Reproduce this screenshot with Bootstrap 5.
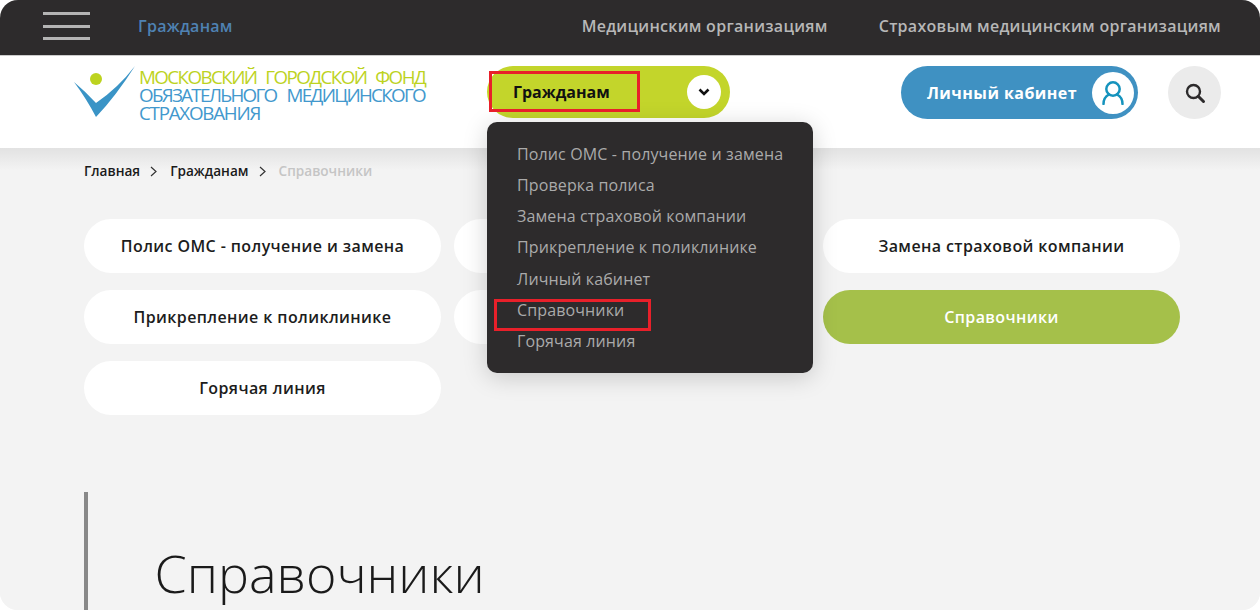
<!DOCTYPE html>
<html lang="ru">
<head>
  <meta charset="UTF-8">
  <title>Справочники</title>
  <meta name="viewport" content="width=device-width, initial-scale=1">
  <link href="https://cdn.jsdelivr.net/npm/bootstrap@5.3.3/dist/css/bootstrap.min.css" rel="stylesheet">
  <style>
    html, body { height: 610px; overflow: hidden; background: #fff; }
    body { font-family: "Open Sans", sans-serif; }
    .page-frame { height: 610px; border-radius: 18px; overflow: hidden; background: #f3f3f3; position: relative; }
    .top-strip { height: 56px; background: #2d2b2c; padding: 0 39px 3px 43px; border-bottom: 1px solid #ccc; }
    .burger { width: 47px; margin-right: 48px; gap: 9.5px; }
    .burger span { display: block; height: 3px; background: #b4b4b4; }
    .top-link { font-size: 16px; font-weight: 600; color: #b7b7b7; text-decoration: none; letter-spacing: .28px; }
    .top-link.current { color: #4f82b3; }
    .top-links-right { gap: 51px; }
    .main-head { height: 92px; background: #fff; padding: 10px 39px 0 74px; }
    .logo-box { width: 413px; }
    .logo-text { margin: 2px 0 0 3px; font-size: 18.8px; line-height: 18px; font-weight: 400; white-space: nowrap; color: #4298cd; }
    .logo-line-a { color: #bdd31f; letter-spacing: -1.58px; word-spacing: 5.5px; }
    .logo-line-b { letter-spacing: -1.7px; word-spacing: 7px; }
    .logo-line-c { letter-spacing: -1.25px; }
    .section-pill { width: 243px; height: 52px; background: #c3d52b; border-radius: 26px; padding: 0 9px 0 26px; font-size: 16px; font-weight: 700; color: #111; }
    .chev-circle { width: 34px; height: 34px; border-radius: 50%; background: #fff; }
    .cabinet-pill { width: 237px; height: 53px; background: #3f91c2; border-radius: 27px; padding: 0 4px 0 26px; font-size: 16px; font-weight: 700; color: #fff; letter-spacing: .45px; margin-left: auto; }
    .cabinet-icon { width: 42px; height: 42px; border-radius: 50%; background: #fff; }
    .search-circle { width: 53px; height: 53px; border-radius: 50%; background: #ebebeb; margin-left: 30px; }
    .page-body { background: linear-gradient(#e2e2e2, #f3f3f3 22px); padding: 0 80px 0 84px; height: 462px; }
    .crumbs { padding-top: 13px; height: 71px; font-size: 13.6px; font-weight: 600; color: #1a1a1a; }
    .crumbs svg { margin: 0 12px 0 10px; }
    .crumbs .now { color: #c5c5c5; }
    .pill-grid { display: grid; grid-template-columns: repeat(3, 357px); column-gap: 12.5px; row-gap: 17px; }
    .pill-item { height: 54px; border-radius: 27px; background: #fff; font-size: 16px; font-weight: 600; color: #1c1c1c; letter-spacing: .4px; }
    .pill-item.active-item { background: #a5c04a; color: #fff; }
    .title-block { margin-top: 77px; height: 130px; border-left: 4px solid #888; padding: 50px 0 0 67px; margin-left: -.5px; }
    .title-block h1 { font-size: 52px; font-weight: 300; color: #1a1a1a; margin: 0; }
    .drop-panel { position: absolute; left: 487px; top: 122px; width: 326px; height: 251px; background: #2d2b2c; border-radius: 10px; padding: 16.5px 0 0 30px; box-shadow: 0 4px 24px rgba(0,0,0,.18); }
    .drop-panel a { display: block; font-size: 16px; line-height: 31.3px; color: #aaa; text-decoration: none; white-space: nowrap; letter-spacing: .13px; }
    .red-box { position: absolute; border: 3px solid #e8202a; }
    .box-one { left: 489px; top: 71px; width: 151px; height: 41px; }
    .box-two { left: 494px; top: 299px; width: 157px; height: 32px; }
  </style>
</head>
<body>
  <div class="page-frame">
    <div class="top-strip d-flex align-items-center">
      <div class="burger d-flex flex-column"><span></span><span></span><span></span></div>
      <a class="top-link current" href="#">Гражданам</a>
      <div class="d-flex top-links-right ms-auto">
        <a class="top-link" href="#">Медицинским организациям</a>
        <a class="top-link" href="#">Страховым медицинским организациям</a>
      </div>
    </div>

    <div class="main-head d-flex align-items-start position-relative">
      <div class="logo-box d-flex align-items-start">
        <svg width="62" height="52" viewBox="0 0 62 52">
          <circle cx="22" cy="13" r="6" fill="#bdd31f"/>
          <path d="M0 16 Q12 26 22 37 Q44 22 61 0 Q42 30 22 51 Q12 32 0 16Z" fill="#3a94c6"/>
        </svg>
        <div class="logo-text">
          <div class="logo-line-a">МОСКОВСКИЙ ГОРОДСКОЙ ФОНД</div>
          <div class="logo-line-b">ОБЯЗАТЕЛЬНОГО МЕДИЦИНСКОГО</div>
          <div class="logo-line-c">СТРАХОВАНИЯ</div>
        </div>
      </div>
      <div class="section-pill d-flex align-items-center justify-content-between">
        <span>Гражданам</span>
        <span class="chev-circle d-flex align-items-center justify-content-center">
          <svg width="12" height="8" viewBox="0 0 12 8"><path d="M1.500 1.500 6 6l4.500-4.500" fill="none" stroke="#111" stroke-width="2.600"/></svg>
        </span>
      </div>
      <div class="cabinet-pill d-flex align-items-center justify-content-between">
        <span>Личный кабинет</span>
        <span class="cabinet-icon d-flex align-items-center justify-content-center">
          <svg width="22" height="24" viewBox="0 0 22 24" fill="none" stroke="#1593bd" stroke-width="2.500" stroke-linecap="round">
            <circle cx="11" cy="8" r="6.700"/>
            <path d="M1.500 23c0-5 2.500-8 5.500-9.500M20.500 23c0-5-2.500-8-5.500-9.500"/>
          </svg>
        </span>
      </div>
      <div class="search-circle d-flex align-items-center justify-content-center">
        <svg width="22" height="22" viewBox="0 0 22 22" fill="none" stroke="#2d2b2c"><circle cx="9.500" cy="9.500" r="6.500" stroke-width="2.400"/><path d="m14.500 14.500 5 5" stroke-width="3" stroke-linecap="round"/></svg>
      </div>
    </div>

    <div class="page-body">
      <div class="crumbs d-flex align-items-start">
        <span>Главная</span>
        <svg class="mt-1" width="8" height="13" viewBox="0 0 8 13"><path d="m1 2 5 4.500L1 11" fill="none" stroke="#333" stroke-width="1.200"/></svg>
        <span>Гражданам</span>
        <svg class="mt-1" width="8" height="13" viewBox="0 0 8 13"><path d="m1 2 5 4.500L1 11" fill="none" stroke="#333" stroke-width="1.200"/></svg>
        <span class="now">Справочники</span>
      </div>
      <div class="pill-grid">
        <div class="pill-item d-flex align-items-center justify-content-center">Полис ОМС - получение и замена</div>
        <div class="pill-item d-flex align-items-center justify-content-center">Проверка полиса</div>
        <div class="pill-item d-flex align-items-center justify-content-center">Замена страховой компании</div>
        <div class="pill-item d-flex align-items-center justify-content-center">Прикрепление к поликлинике</div>
        <div class="pill-item d-flex align-items-center justify-content-center">Личный кабинет</div>
        <div class="pill-item active-item d-flex align-items-center justify-content-center">Справочники</div>
        <div class="pill-item d-flex align-items-center justify-content-center">Горячая линия</div>
      </div>
      <div class="title-block"><h1>Справочники</h1></div>
    </div>

    <div class="drop-panel">
      <a href="#">Полис ОМС - получение и замена</a>
      <a href="#">Проверка полиса</a>
      <a href="#">Замена страховой компании</a>
      <a href="#">Прикрепление к поликлинике</a>
      <a href="#">Личный кабинет</a>
      <a href="#">Справочники</a>
      <a href="#">Горячая линия</a>
    </div>
    <div class="red-box box-one"></div>
    <div class="red-box box-two"></div>
  </div>
  <script src="https://cdn.jsdelivr.net/npm/bootstrap@5.3.3/dist/js/bootstrap.bundle.min.js"></script>
</body>
</html>
